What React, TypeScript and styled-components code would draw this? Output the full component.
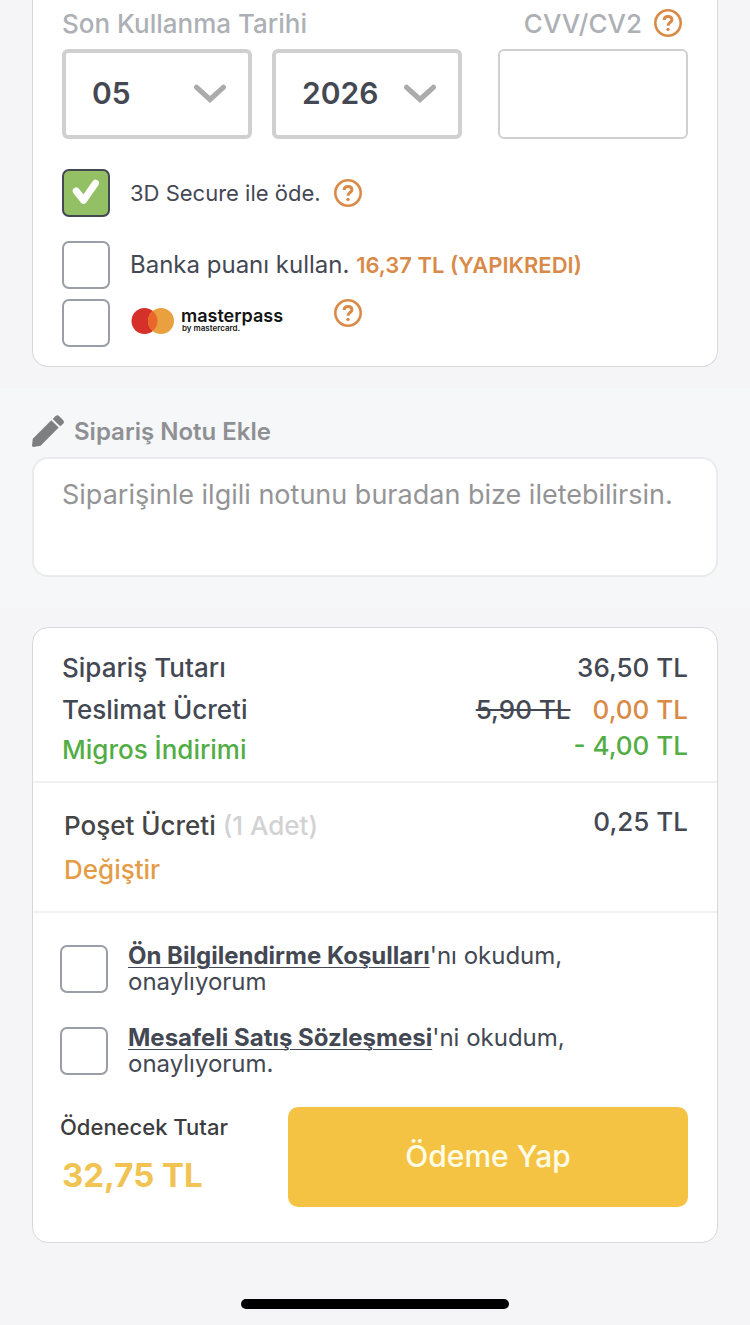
import React from "react";
import styled, { createGlobalStyle } from "styled-components";

const colors = {
  page: "#f5f5f8",
  band: "#f6f7f9",
  ink: "#434853",
  text: "#454545",
  label: "#adb0b5",
  orange: "#d98a48",
  amber: "#e49c47",
  green: "#52ad44",
  yellow: "#f5c343",
  line: "#d9d9db",
  field: "#d0d0d0",
};

const GlobalStyle = createGlobalStyle`
  *, *::before, *::after { box-sizing: border-box; }
  body {
    margin: 0;
    background: ${colors.page};
    color: ${colors.ink};
    font-family: Inter, "Liberation Sans", sans-serif;
  }
  input, select, textarea, button { font: inherit; color: inherit; }
`;

const Page = styled.main`
  display: flex;
  flex-direction: column;
`;

const Card = styled.section<{ $open?: boolean }>`
  margin: 0 32px;
  background: #fff;
  border: 1px solid ${colors.line};
  border-radius: ${(p) => (p.$open ? "0 0 16px 16px" : "16px")};
  ${(p) => p.$open && "border-top: 0;"}
`;

const CardForm = styled.div`
  padding: 3px 29px 19px;
`;

const FieldRow = styled.div`
  display: flex;
  gap: 36px;
  margin-bottom: 30px;
`;

const FieldGroup = styled.div<{ $grow: number }>`
  flex: ${(p) => p.$grow} 1 0;
  min-width: 0;
`;

const FieldLabel = styled.div<{ $end?: boolean }>`
  display: flex;
  align-items: center;
  justify-content: ${(p) => (p.$end ? "flex-end" : "flex-start")};
  gap: 12px;
  height: 40px;
  margin-bottom: 6px;
  padding-right: ${(p) => (p.$end ? "6px" : "0")};
  color: ${colors.label};
  font-size: 26px;
  font-weight: 500;
  white-space: nowrap;
`;

const SelectPair = styled.div`
  display: grid;
  grid-template-columns: 1fr 1fr;
  gap: 20px;
`;

const SelectBox = styled.div`
  position: relative;
`;

const Select = styled.select`
  appearance: none;
  display: block;
  width: 100%;
  height: 90px;
  padding: 0 26px 2px;
  border: 4px solid ${colors.field};
  border-radius: 6px;
  background: #fff;
  font-size: 30px;
  font-weight: 600;
`;

const Chevron = styled.svg`
  position: absolute;
  top: 34px;
  right: 25px;
  width: 34px;
  height: 22px;
  pointer-events: none;
`;

const CodeInput = styled.input`
  display: block;
  width: 100%;
  height: 90px;
  padding: 0 28px;
  border: 2px solid ${colors.field};
  border-radius: 6px;
  background: #fff;
  font-size: 30px;
`;

const Option = styled.div<{ $gap: number }>`
  display: flex;
  align-items: center;
  gap: 20px;
  margin-top: ${(p) => p.$gap}px;
`;

const OptionLabel = styled.label<{ $fixed?: boolean }>`
  font-size: ${(p) => (p.$fixed ? 22 : 24)}px;
  line-height: 28px;
  ${(p) => p.$fixed && "width: 204px; margin-right: -20px;"}
  white-space: nowrap;
`;

const Points = styled.span`
  color: ${colors.orange};
  font-size: 22px;
  font-weight: 600;
`;

const CheckWrap = styled.span`
  position: relative;
  flex: none;
  width: 48px;
  height: 48px;
`;

const CheckInput = styled.input`
  appearance: none;
  display: block;
  width: 48px;
  height: 48px;
  margin: 0;
  border: 2px solid #9a9ea6;
  border-radius: 7px;
  background: #fff;

  &:checked {
    border-color: ${colors.ink};
    background: #93bf65;
  }
  &:checked + svg { display: block; }
`;

const CheckMark = styled.svg`
  display: none;
  position: absolute;
  inset: 0;
  width: 48px;
  height: 48px;
  pointer-events: none;
`;

const HelpButton = styled.button<{ $top?: boolean }>`
  display: block;
  flex: none;
  width: 28px;
  height: 28px;
  padding: 0;
  border: 0;
  background: none;
  ${(p) => p.$top && "align-self: flex-start;"}

  svg { display: block; }
`;

const LogoSvg = styled.svg`
  display: block;
  width: 156px;
  height: 40px;
`;

const NoteBand = styled.section`
  margin: 21px 0 19px;
  padding: 27px 32px 31px;
  background: ${colors.band};
`;

const NoteTitle = styled.label`
  display: flex;
  align-items: center;
  gap: 10px;
  height: 32px;
  margin-bottom: 10px;
  color: #8f9093;
  font-size: 24px;
  font-weight: 600;
`;

const NoteInput = styled.textarea`
  display: block;
  width: 100%;
  height: 120px;
  padding: 18px 28px;
  border: 2px solid #ebebed;
  border-radius: 16px;
  background: #fff;
  resize: none;
  overflow: hidden;
  font-size: 27px;
  line-height: 36px;

  &::placeholder { color: #949496; opacity: 1; }
`;

const Section = styled.div<{ $pad: string }>`
  padding: ${(p) => p.$pad};
  & + & { border-top: 2px solid #f1f1f2; }
`;

const PriceRow = styled.div<{ $tone?: string; $after?: number }>`
  display: flex;
  justify-content: space-between;
  align-items: flex-start;
  margin-bottom: ${(p) => p.$after ?? 0}px;
  color: ${(p) => p.$tone ?? colors.ink};
  font-size: 26px;
  font-weight: 500;
  line-height: 40px;
`;

const Amount = styled.span<{ $raised?: boolean }>`
  ${(p) => p.$raised && "line-height: 32px;"}
`;

const OldPrice = styled.s`
  margin-right: 22px;
`;

const NewPrice = styled.span`
  color: ${colors.orange};
`;

const BagLabel = styled.span`
  color: ${colors.text};
`;

const Count = styled.span`
  color: #d2d2d4;
`;

const ChangeButton = styled.button`
  display: block;
  padding: 0;
  border: 0;
  background: none;
  color: ${colors.amber};
  font-size: 26px;
  font-weight: 500;
  line-height: 40px;
`;

const Consent = styled.div`
  display: flex;
  align-items: center;
  gap: 20px;
  margin-bottom: 30px;
  font-size: 24px;
  line-height: 26px;
`;

const ConsentLink = styled.a`
  color: inherit;
  font-weight: 700;
  text-underline-offset: 3px;
  text-decoration-thickness: 1px;
`;

const PayRow = styled.div`
  display: flex;
`;

const Total = styled.div`
  flex: 228 1 0;
`;

const TotalLabel = styled.div`
  color: #3c3c3e;
  font-size: 22px;
  font-weight: 500;
  line-height: 40px;
`;

const TotalValue = styled.div`
  margin-top: 4px;
  padding-left: 2px;
  color: #f0c352;
  font-size: 33px;
  font-weight: 700;
  line-height: 48px;
`;

const PayButton = styled.button`
  flex: 400 1 0;
  height: 100px;
  padding: 0 0 2px;
  border: 0;
  border-radius: 10px;
  background: ${colors.yellow};
  color: #fffce6;
  font-size: 30px;
  font-weight: 500;
`;

const HomeBar = styled.div`
  align-self: center;
  width: 268px;
  height: 10px;
  margin: 56px 0 16px;
  border-radius: 5px;
  background: #000;
`;

function Help({ label, top }: { label: string; top?: boolean }) {
  return (
    <HelpButton type="button" aria-label={label} $top={top}>
      <svg width="28" height="28" viewBox="0 0 28 28" fill="none" stroke={colors.orange}>
        <circle cx="14" cy="14" r="12.7" strokeWidth="2.6" />
        <path
          d="M10.2 11C10.2 8.600 11.800 7.400 14 7.400c2.300 0 3.900 1.300 3.900 3.300 0 2.900-3.900 2.700-3.900 6"
          strokeWidth="3"
        />
        <circle cx="14" cy="20.400" r="1.700" fill={colors.orange} stroke="none" />
      </svg>
    </HelpButton>
  );
}

function Check({ id, checked }: { id: string; checked?: boolean }) {
  return (
    <CheckWrap>
      <CheckInput type="checkbox" id={id} defaultChecked={checked} />
      <CheckMark viewBox="0 0 48 48" fill="none">
        <path d="M14.200 22L21.600 31.300L33.500 14.200" stroke="#fff" strokeWidth="7" strokeLinecap="round" strokeLinejoin="round" />
      </CheckMark>
    </CheckWrap>
  );
}

function Dropdown({ label, value, options }: { label: string; value: string; options: string[] }) {
  return (
    <SelectBox>
      <Select aria-label={label} defaultValue={value}>
        {options.map((o) => (
          <option key={o}>{o}</option>
        ))}
      </Select>
      <Chevron viewBox="0 0 34 22" fill="none">
        <path d="M3.600 4.300L17 16.500L30.400 4.300" stroke="#ababab" strokeWidth="5.200" strokeLinecap="round" />
      </Chevron>
    </SelectBox>
  );
}

function MasterpassLogo() {
  return (
    <LogoSvg viewBox="0 -4 156 40" role="img" aria-label="masterpass by mastercard">
      <circle cx="14.500" cy="14" r="13" fill="#d6302b" />
      <circle cx="31" cy="14" r="13" fill="#e9a03f" />
      <path d="M22.750 3.950a13 13 0 0 1 0 20.100a13 13 0 0 1 0-20.100z" fill="#e9672a" />
      <text x="51" y="15" fontFamily="Inter, sans-serif" fontSize="18" fontWeight="600" fill="#141414">masterpass</text>
      <text x="52" y="24" fontFamily="Inter, sans-serif" fontSize="8" fontWeight="600" fill="#141414">by mastercard.</text>
    </LogoSvg>
  );
}

function Pencil() {
  return (
    <svg width="32" height="32" viewBox="0 0 32 32" fill="#7d7f81" aria-hidden="true">
      <path d="M19.300 5.200L26.700 12.400L8.600 30.800L1.400 32Q0 32 0 30.600L.8 23.800Z" />
      <path d="M20.700 3.900L23.400 1.200Q25.300-.6 27.200 1.200L31 5Q32.800 7 31 8.900L28.200 11.300Z" />
    </svg>
  );
}

const months = ["01", "02", "03", "04", "05", "06", "07", "08", "09", "10", "11", "12"];
const years = ["2024", "2025", "2026", "2027", "2028"];

export default function App() {
  return (
    <>
      <GlobalStyle />
      <Page>
        <Card $open>
          <CardForm>
            <FieldRow>
              <FieldGroup $grow={400}>
                <FieldLabel>Son Kullanma Tarihi</FieldLabel>
                <SelectPair>
                  <Dropdown label="Ay" value="05" options={months} />
                  <Dropdown label="Yıl" value="2026" options={years} />
                </SelectPair>
              </FieldGroup>
              <FieldGroup $grow={190}>
                <FieldLabel $end>
                  <label htmlFor="cvv">CVV/CV2</label>
                  <Help label="CVV nedir?" />
                </FieldLabel>
                <CodeInput id="cvv" type="text" inputMode="numeric" />
              </FieldGroup>
            </FieldRow>
            <Option $gap={0}>
              <Check id="secure" checked />
              <OptionLabel htmlFor="secure" $fixed>3D Secure ile öde.</OptionLabel>
              <Help label="3D Secure nedir?" />
            </Option>
            <Option $gap={24}>
              <Check id="points" />
              <OptionLabel htmlFor="points">
                Banka puanı kullan. <Points>16,37 TL (YAPIKREDI)</Points>
              </OptionLabel>
            </Option>
            <Option $gap={10}>
              <Check id="masterpass" />
              <OptionLabel htmlFor="masterpass" $fixed>
                <MasterpassLogo />
              </OptionLabel>
              <Help label="Masterpass nedir?" top />
            </Option>
          </CardForm>
        </Card>

        <NoteBand>
          <NoteTitle htmlFor="note">
            <Pencil />
            Sipariş Notu Ekle
          </NoteTitle>
          <NoteInput id="note" placeholder="Siparişinle ilgili notunu buradan bize iletebilirsin." />
        </NoteBand>

        <Card>
          <Section $pad="20px 29px 11px">
            <PriceRow $after={2}>
              <span>Sipariş Tutarı</span>
              <Amount>36,50 TL</Amount>
            </PriceRow>
            <PriceRow>
              <span>Teslimat Ücreti</span>
              <Amount>
                <OldPrice>5,90 TL</OldPrice>
                <NewPrice>0,00 TL</NewPrice>
              </Amount>
            </PriceRow>
            <PriceRow $tone={colors.green}>
              <span>Migros İndirimi</span>
              <Amount $raised>- 4,00 TL</Amount>
            </PriceRow>
          </Section>
          <Section $pad="23px 29px 21px 31px">
            <PriceRow $after={4}>
              <BagLabel>
                Poşet Ücreti <Count>(1 Adet)</Count>
              </BagLabel>
              <Amount $raised>0,25 TL</Amount>
            </PriceRow>
            <ChangeButton type="button">Değiştir</ChangeButton>
          </Section>
          <Section $pad="30px 29px 35px 27px">
            <Consent>
              <Check id="terms" />
              <label htmlFor="terms">
                <ConsentLink href="#on-bilgilendirme">Ön Bilgilendirme Koşulları</ConsentLink>'nı okudum,
                <br />
                onaylıyorum
              </label>
            </Consent>
            <Consent>
              <Check id="contract" />
              <label htmlFor="contract">
                <ConsentLink href="#mesafeli-satis">Mesafeli Satış Sözleşmesi</ConsentLink>'ni okudum,
                <br />
                onaylıyorum.
              </label>
            </Consent>
            <PayRow>
              <Total>
                <TotalLabel>Ödenecek Tutar</TotalLabel>
                <TotalValue>32,75 TL</TotalValue>
              </Total>
              <PayButton type="button">Ödeme Yap</PayButton>
            </PayRow>
          </Section>
        </Card>
        <HomeBar />
      </Page>
    </>
  );
}
